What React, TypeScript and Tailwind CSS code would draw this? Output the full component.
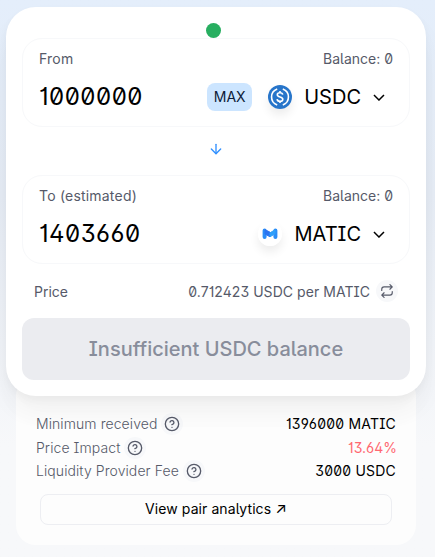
import React from 'react';
import { ArrowDown, HelpCircle } from 'lucide-react';

const UsdcLogo: React.FC = () => (
  <svg width="24" height="24" viewBox="0 0 24 24" fill="none">
    <circle cx="12" cy="12" r="12" fill="#2775ca" />
    <path d="M9.2 4A8.5 8.5 0 0 0 9.2 20M14.8 4A8.5 8.5 0 0 1 14.8 20" stroke="#fff" strokeWidth="1.6" />
    <path
      d="M14.7 9.7c-.2-1.3-1.1-2-2.7-2s-2.7.8-2.7 2c0 3.1 5.5 1.4 5.5 4.5 0 1.3-1.2 2.1-2.8 2.1s-2.8-.8-2.9-2.2M12 5.9v1.8M12 16.3v1.8"
      stroke="#fff"
      strokeWidth="1.6"
    />
  </svg>
);

const MaticLogo: React.FC = () => (
  <svg width="24" height="24" viewBox="0 0 24 24" fill="none">
    <circle cx="12" cy="12" r="12" fill="#fff" />
    <path d="M6.6 8.6v6.4M17.4 8.6v6.4" stroke="#2b8df7" strokeWidth="4" strokeLinecap="round" />
    <path d="M7 7.6l5 2.6v4.6L7 12z" fill="#2b74f0" stroke="#2b74f0" strokeLinejoin="round" />
    <path d="M17 7.8l-5 3v4l5-3z" fill="#2f9ffa" stroke="#2f9ffa" strokeLinejoin="round" />
  </svg>
);

const SwapRateIcon: React.FC = () => (
  <svg
    width="14"
    height="14"
    viewBox="0 0 24 24"
    fill="none"
    stroke="currentColor"
    strokeWidth="2"
    strokeLinecap="round"
    strokeLinejoin="round"
  >
    <path d="M17 1l4 4-4 4M3 11V9a4 4 0 0 1 4-4h14M7 23l-4-4 4-4M21 13v2a4 4 0 0 1-4 4H3" />
  </svg>
);

interface CurrencyPanelProps {
  label: string;
  amount: string;
  symbol: string;
  logo: React.ReactNode;
  showMax?: boolean;
}

const CurrencyPanel: React.FC<CurrencyPanelProps> = ({ label, amount, symbol, logo, showMax }) => (
  <div className="h-[89px] rounded-[20px] border border-[#f7f8fa] bg-white">
    <div className="mt-[10px] flex h-5 justify-between px-4 text-sm leading-5 text-[#565a69]">
      <span className="tracking-[0.2px]">{label}</span>
      <span>Balance: 0</span>
    </div>
    <div className="mt-[10px] flex h-9 items-center px-4">
      <span className="flex-1 text-2xl leading-9 tracking-[0.5px]">{amount}</span>
      {showMax && (
        <button className="mr-4 h-7 w-[45px] rounded-lg bg-[#cce5ff] text-sm text-[#0d1b38]">MAX</button>
      )}
      <span className="rounded-full shadow-[0_6px_10px_rgba(0,0,0,0.075)]">{logo}</span>
      <span className="ml-3 text-xl">{symbol}</span>
      <svg className="ml-3 mr-2" width="12" height="7" viewBox="0 0 12 7" fill="none">
        <path d="M0.97 1l5 5 5-5" stroke="black" strokeWidth="1.5" />
      </svg>
    </div>
  </div>
);

interface DetailRowProps {
  label: string;
  value: string;
  warning?: boolean;
}

const DetailRow: React.FC<DetailRowProps> = ({ label, value, warning }) => (
  <div className="flex h-[23.5px] items-center justify-between text-sm">
    <div className="flex items-center font-light tracking-[0.08px] text-[#565a69]">
      {label}
      <span className="ml-1 flex size-[22px] items-center justify-center rounded-full bg-[#f7f8fa]">
        <HelpCircle size={16} strokeWidth={2} />
      </span>
    </div>
    <span className={warning ? '-mr-px text-[#ff6871]' : 'tracking-[0.2px] text-black'}>{value}</span>
  </div>
);

const details: DetailRowProps[] = [
  { label: 'Minimum received', value: '1396000 MATIC' },
  { label: 'Price Impact', value: '13.64%', warning: true },
  { label: 'Liquidity Provider Fee', value: '3000 USDC' },
];

const App: React.FC = () => {
  return (
    <div className="h-[557px] w-[435px] overflow-hidden bg-linear-to-b from-[#e4eefb] via-[#e6ecf5] via-35% to-[#f7f8fa] to-80% pl-[6px] pt-[7px] font-['Inter',sans-serif] text-black [font-feature-settings:'ss01','ss02','cv01','cv03']">
      <div className="relative z-10 h-[389px] w-[420px] rounded-[30px] bg-white px-4 shadow-[0_0_1px_rgba(0,0,0,0.01),0_4px_8px_rgba(0,0,0,0.04),0_16px_24px_rgba(0,0,0,0.04),0_24px_32px_rgba(0,0,0,0.01)]">
        <div className="flex h-[31px] items-end justify-center pr-[5px]">
          <div className="size-[15px] rounded-full bg-[#27ae60]" />
        </div>
        <CurrencyPanel label="From" amount="1000000" symbol="USDC" logo={<UsdcLogo />} showMax />
        <div className="flex h-12 items-center justify-center pb-[5px]">
          <ArrowDown size={16} strokeWidth={2} color="#2f8fff" />
        </div>
        <CurrencyPanel label="To (estimated)" amount="1403660" symbol="MATIC" logo={<MaticLogo />} />
        <div className="flex h-[54px] items-center justify-between px-3 text-sm text-[#565a69]">
          <span className="pt-0.5">Price</span>
          <div className="flex items-center">
            <span className="pt-0.5 tracking-[0.05px]">0.712423 USDC per MATIC</span>
            <span className="ml-[6px] flex size-[22px] items-center justify-center rounded-full bg-[#f7f8fa]">
              <SwapRateIcon />
            </span>
          </div>
        </div>
        <button className="h-[62px] w-full rounded-xl bg-[#ebecf0] text-xl font-medium text-[#888d9b]">
          Insufficient USDC balance
        </button>
      </div>
      <div className="-mt-5 ml-[10px] h-[169px] w-[400px] rounded-[20px] bg-[#fdfdfd] px-5 pt-[36.4px]">
        {details.map((row) => (
          <DetailRow key={row.label} {...row} />
        ))}
        <button className="mx-1 mt-[11.1px] flex h-[31px] w-[352px] items-center justify-center rounded-lg border border-[#edeef2] text-sm tracking-[0.08px]">
          View pair analytics
          <span className="ml-1 pb-0.5 text-[15px]">↗</span>
        </button>
      </div>
    </div>
  );
};

export default App;
